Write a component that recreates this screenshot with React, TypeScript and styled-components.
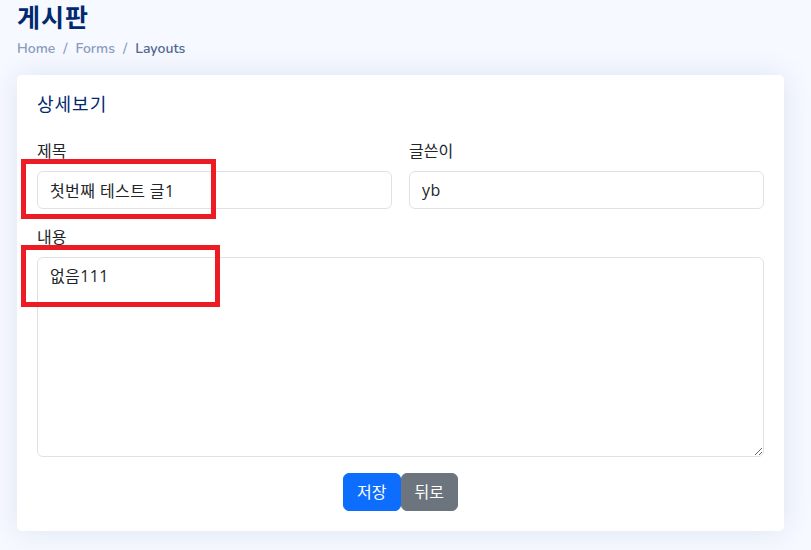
import React from "react";
import styled, { createGlobalStyle } from "styled-components";

const GlobalStyle = createGlobalStyle`
	* {
		box-sizing: border-box;
	}
	body {
		margin: 0;
		background: #f6f9ff;
		font-family: "Open Sans", "Noto Sans CJK KR", sans-serif;
		color: #444444;
	}
`;

const Main = styled.main`
	position: relative;
	padding: 4px 27px 20px 17px;
	min-height: 550px;
`;

const PageTitle = styled.div`
	margin-bottom: 16px;
`;

const Heading = styled.h1`
	margin: 0;
	font-family: "Nunito", "Noto Sans CJK KR", sans-serif;
	font-size: 25px;
	line-height: 1.2;
	font-weight: 700;
	letter-spacing: 1px;
	color: #012970;
`;

const Crumbs = styled.ol`
	display: flex;
	list-style: none;
	margin: 5px 0 0;
	padding: 0;
	font-family: "Nunito", "Lato", sans-serif;
	font-size: 14px;
	font-weight: 600;
	line-height: 20px;
`;

const Crumb = styled.li<{ $active?: boolean }>`
	color: ${(p) => (p.$active ? "#51678f" : "#899bbd")};
	&:not(:first-child)::before {
		content: "/";
		padding: 0 8px;
		color: #899bbd;
	}
`;

const Card = styled.section`
	background: #ffffff;
	border-radius: 5px;
	box-shadow: 0 0 30px rgba(1, 41, 112, 0.1);
	padding: 0 20px 20px;
`;

const CardTitle = styled.h5`
	margin: 0;
	padding: 19px 0 15px;
	font-size: 18px;
	font-weight: 400;
	line-height: 1.2;
	letter-spacing: 1px;
	color: #012970;
`;

const FormGrid = styled.form`
	display: grid;
	grid-template-columns: 1fr 1fr;
	column-gap: 17px;
	row-gap: 16px;
	padding-top: 8px;
`;

const Field = styled.div<{ $wide?: boolean }>`
	display: flex;
	flex-direction: column;
	grid-column: ${(p) => (p.$wide ? "1 / -1" : "auto")};
`;

const Label = styled.label`
	font-size: 16px;
	line-height: 24px;
	color: #212529;
	margin-bottom: 8px;
`;

const Input = styled.input`
	height: 38px;
	padding: 6px 12px;
	border: 1px solid #dee2e6;
	border-radius: 6px;
	font-family: inherit;
	font-size: 16px;
	line-height: 24px;
	letter-spacing: 0.4px;
	color: #212529;
	background: #fff;
	outline: none;
`;

const TextArea = styled.textarea`
	height: 200px;
	padding: 6px 12px;
	border: 1px solid #dee2e6;
	border-radius: 6px;
	font-family: inherit;
	font-size: 16px;
	line-height: 24px;
	letter-spacing: 0.4px;
	color: #212529;
	background: #fff;
	resize: vertical;
	outline: none;
`;

const Actions = styled.div`
	grid-column: 1 / -1;
	display: flex;
	justify-content: center;
`;

const Button = styled.button<{ $tone: "primary" | "secondary" }>`
	height: 38px;
	padding: 6px 13px;
	border: 1px solid ${(p) => (p.$tone === "primary" ? "#0d6efd" : "#6c757d")};
	border-radius: 6px;
	background: ${(p) => (p.$tone === "primary" ? "#0d6efd" : "#6c757d")};
	color: #ffffff;
	font-family: inherit;
	font-size: 16px;
	line-height: 24px;
	cursor: pointer;
`;

const Marker = styled.div<{ $x: number; $y: number; $w: number; $h: number }>`
	position: absolute;
	left: ${(p) => p.$x}px;
	top: ${(p) => p.$y}px;
	width: ${(p) => p.$w}px;
	height: ${(p) => p.$h}px;
	border: 5px solid #ed1c24;
	pointer-events: none;
`;

export default function App() {
	return (
		<>
			<GlobalStyle />
			<Main>
				<PageTitle>
					<Heading>게시판</Heading>
					<Crumbs>
						<Crumb>Home</Crumb>
						<Crumb>Forms</Crumb>
						<Crumb $active>Layouts</Crumb>
					</Crumbs>
				</PageTitle>
				<Card>
					<CardTitle>상세보기</CardTitle>
					<FormGrid onSubmit={(e) => e.preventDefault()}>
						<Field>
							<Label>제목</Label>
							<Input defaultValue="첫번째 테스트 글1" />
						</Field>
						<Field>
							<Label>글쓴이</Label>
							<Input defaultValue="yb" />
						</Field>
						<Field $wide>
							<Label>내용</Label>
							<TextArea defaultValue="없음111" />
						</Field>
						<Actions>
							<Button type="submit" $tone="primary">저장</Button>
							<Button type="button" $tone="secondary">뒤로</Button>
						</Actions>
					</FormGrid>
				</Card>
				<Marker $x={21} $y={159} $w={195} $h={60} />
				<Marker $x={21} $y={245} $w={199} $h={62} />
			</Main>
		</>
	);
}
